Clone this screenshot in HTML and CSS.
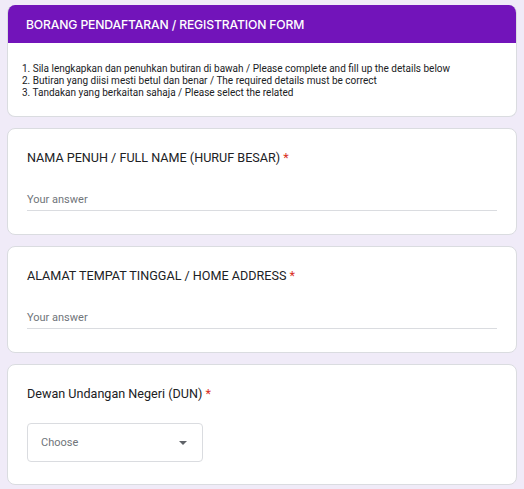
FILE: index.html
```html
<!DOCTYPE html>
<html>
<head>
<meta charset="utf-8">
<link rel="stylesheet" href="styles.css">
</head>
<body>
<div class="page">
  <div class="card intro">
    <div class="banner">BORANG PENDAFTARAN / REGISTRATION FORM</div>
    <div class="intro-body">
      <div>1. Sila lengkapkan dan penuhkan butiran di bawah / Please complete and fill up the details below</div>
      <div>2. Butiran yang diisi mesti betul dan benar / The required details must be correct</div>
      <div>3. Tandakan yang berkaitan sahaja / Please select the related</div>
    </div>
  </div>
  <div class="card q">
    <div class="q-title">NAMA PENUH / FULL NAME (HURUF BESAR) <span class="req">*</span></div>
    <div class="answer">Your answer</div>
  </div>
  <div class="card q">
    <div class="q-title">ALAMAT TEMPAT TINGGAL / HOME ADDRESS <span class="req">*</span></div>
    <div class="answer">Your answer</div>
  </div>
  <div class="card q q-select">
    <div class="q-title">Dewan Undangan Negeri (DUN) <span class="req">*</span></div>
    <div class="select">
      <span>Choose</span>
      <svg class="caret" width="8" height="4" viewBox="0 0 8 4"><path d="M0 0h8L4 4z" fill="#5f6368"/></svg>
    </div>
  </div>
</div>
</body>
</html>
```
FILE: styles.css
```css
html, body { margin: 0; padding: 0; }
body {
  background: #f0ebf8;
  font-family: Roboto, "Liberation Sans", Arial, sans-serif;
  color: #202124;
}
.page {
  padding: 5px 7px;
  display: flex;
  flex-direction: column;
  gap: 11px;
}
.card {
  background: #fff;
  border: 1px solid #dadce0;
  border-radius: 8px;
  overflow: hidden;
}
.intro { border-top: none; }
.banner {
  background: #7214ba;
  color: #fff;
  height: 38px;
  display: flex;
  align-items: center;
  padding-left: 18px;
  font-family: Inter, Roboto, sans-serif;
  font-weight: 500;
  font-size: 12.2px;
  letter-spacing: -0.15px;
}
.intro-body {
  padding: 20px 14px 17px;
  font-size: 10px;
  line-height: 12px;
  color: #202124;
}
.q {
  padding: 20px 19px 23px 19px;
}
.q-title {
  font-size: 12.6px;
  line-height: 18px;
  color: #202124;
}
.req { color: #d93025; }
.answer {
  margin-top: 26px;
  font-size: 11px;
  color: #70757a;
  padding-bottom: 4px;
  border-bottom: 1px solid #dadce0;
}
.q-select { padding-bottom: 22px; }
.select {
  margin-top: 20px;
  height: 37px;
  border: 1px solid #dadce0;
  border-radius: 4px;
  display: flex;
  align-items: center;
  justify-content: space-between;
  padding: 0 15px 0 13px;
  box-sizing: content-box;
  width: 146px;
  font-size: 11px;
  color: #70757a;
}
.caret { display: block; }
```
